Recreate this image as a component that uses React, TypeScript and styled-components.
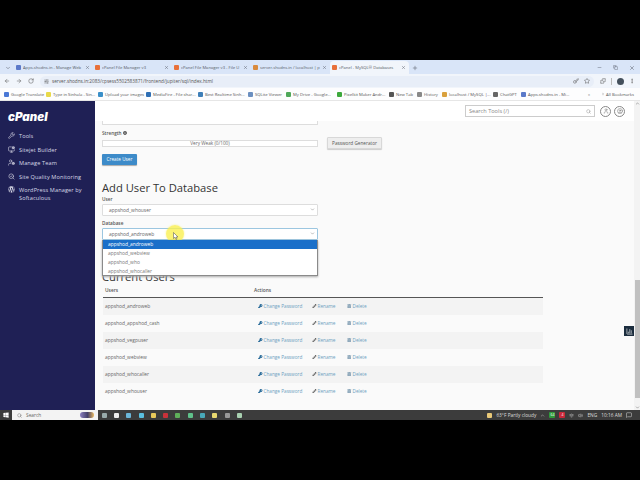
import { createGlobalStyle, styled } from 'styled-components'
import {
  ArrowLeft, ArrowRight, BarChart3, ChevronDown, ChevronUp, CircleUser, Copy, Folder, Key,
  MessageSquare, Minus, MonitorCog, MoreVertical, Plus, Puzzle, RotateCw, Search, SearchCheck,
  SlidersHorizontal, Star, User, UserCog, Volume2, Wifi, Wrench, X,
} from 'lucide-react'
import { FaWordpress, FaInfoCircle, FaWindows, FaKey, FaPencilAlt, FaTrashAlt } from 'react-icons/fa'

const GlobalStyle = createGlobalStyle`
  html, body { margin: 0; padding: 0; background: #000; }
  body { width: 640px; height: 480px; overflow: hidden; font-family: "Open Sans", "Liberation Sans", sans-serif; }
  * { box-sizing: border-box; }
`

const Frame = styled.div`
  width: 640px;
  height: 480px;
  padding: 60px 0;
  display: flex;
  flex-direction: column;
`

const TabStrip = styled.div`
  height: 14px;
  background: #d9e5f8;
  display: flex;
  align-items: flex-end;
  padding-left: 2px;
  color: #555b66;
  font-size: 4.15px;
`

const StripButton = styled.div`
  width: 11px;
  height: 12px;
  display: flex;
  align-items: center;
  justify-content: center;
  margin-right: 1px;
`

const Tab = styled.div<{ $active?: boolean }>`
  width: 79px;
  height: 13px;
  padding: 0 3px 0 2px;
  border-radius: 4px 4px 0 0;
  background: ${p => (p.$active ? '#f1f5fb' : 'transparent')};
  display: flex;
  align-items: center;
  gap: 2px;
  white-space: nowrap;
`

const TabTitle = styled.span`
  flex: 1;
  overflow: hidden;
`

const Fav = styled.span<{ $c: string }>`
  width: 5px;
  height: 5px;
  flex: none;
  border-radius: 1px;
  background: ${p => p.$c};
`

const WindowControls = styled.div`
  margin-left: auto;
  height: 13px;
  width: 43px;
  display: flex;
  align-items: center;
  justify-content: space-between;
  padding-right: 5px;
`

const AddressRow = styled.div`
  height: 14px;
  background: #f1f5fb;
  display: flex;
  align-items: center;
  padding: 0 5px 0 4px;
  gap: 6px;
  color: #555;
`

const AddressPill = styled.div`
  flex: 1;
  height: 11px;
  padding: 0 4px;
  border-radius: 6px;
  background: #e8eef8;
  display: flex;
  align-items: center;
  font-size: 4.7px;
  color: #555;
  gap: 3px;
`

const Url = styled.span`
  flex: 1;
`

const PillIcons = styled.div`
  display: flex;
  gap: 5px;
`

const ProfileTools = styled.div`
  width: 35px;
  display: flex;
  align-items: center;
  justify-content: space-between;
`

const Divider = styled.span`
  width: 1px;
  height: 7px;
  background: #bbb;
`

const Profile = styled.span`
  width: 7px;
  height: 7px;
  border-radius: 50%;
  background: #44505c;
`

const Bookmarks = styled.div`
  height: 13px;
  background: #fdfdfe;
  border-bottom: 1px solid #e6e6e6;
  display: flex;
  align-items: center;
  padding-left: 4px;
  font-size: 4.2px;
  color: #555;
`

const Bookmark = styled.div<{ $w: number }>`
  width: ${p => p.$w}px;
  flex: none;
  display: flex;
  align-items: center;
  gap: 2px;
  white-space: nowrap;
`

const Page = styled.div`
  flex: 1;
  min-height: 0;
  display: flex;
  background: #fafafa;
`

const Sidebar = styled.nav`
  width: 95px;
  flex: none;
  background: #1f2055;
  color: #d7d8e6;
  padding: 10px 0 0 8px;
  font-size: 5.6px;
`

const Logo = styled.div`
  font-family: Inter, sans-serif;
  font-weight: 900;
  font-style: italic;
  font-size: 11.5px;
  line-height: 12px;
  color: #fff;
  margin-bottom: 9px;
`

const NavItem = styled.div`
  display: flex;
  align-items: flex-start;
  gap: 4px;
  min-height: 13.5px;
  line-height: 8px;
  letter-spacing: 0.1px;
  svg { flex: none; }
`

const Main = styled.main`
  flex: 1;
  position: relative;
  overflow: hidden;
  display: flex;
  flex-direction: column;
`

const TopBar = styled.div`
  height: 20px;
  background: #fff;
  display: flex;
  justify-content: flex-end;
  align-items: center;
  gap: 3px;
  padding: 0 9px 0 0;
  color: #777;
`

const SearchBox = styled.div`
  width: 130px;
  height: 12px;
  border: 1px solid #ccc;
  background: #fff;
  display: flex;
  align-items: center;
  justify-content: space-between;
  padding: 0 3px;
  font-size: 5.6px;
  color: #888;
  margin-right: 2px;
`

const RoundIcon = styled.div`
  width: 11px;
  height: 11px;
  border: 1px solid #888;
  border-radius: 50%;
  display: flex;
  align-items: center;
  justify-content: center;
`

const Content = styled.div`
  padding: 0 91px 0 7px;
  display: flex;
  flex-direction: column;
  color: #444;
`

const CutInput = styled.div`
  width: 216px;
  height: 4px;
  background: #fff;
  border: 1px solid #ddd;
  border-top: 0;
  border-radius: 0 0 1px 1px;
`

const SmallLabel = styled.div`
  font-size: 4.7px;
  font-weight: 600;
  line-height: 6px;
  color: #555;
  display: flex;
  align-items: center;
  gap: 1px;
`

const StrengthLabel = styled(SmallLabel)`
  margin-top: 5px;
`

const StrengthRow = styled.div`
  display: flex;
  align-items: center;
  gap: 9px;
  height: 12px;
  margin-top: 1px;
`

const Meter = styled.div`
  width: 216px;
  height: 7px;
  border: 1px solid #ddd;
  background: #fff;
  font-size: 4.7px;
  line-height: 5px;
  text-align: center;
  color: #666;
`

const GenButton = styled.div`
  width: 55px;
  height: 12px;
  background: #eeeeee;
  border: 1px solid #d8d8d8;
  border-radius: 1px;
  box-shadow: 0 1px 1px #ccc;
  font-size: 4.7px;
  line-height: 10px;
  text-align: center;
  color: #555;
`

const PrimaryButton = styled.div`
  width: 35px;
  height: 11px;
  margin-top: 5px;
  background: #3d8bc9;
  border-radius: 1px;
  box-shadow: 0 1px 1px #aaa;
  font-size: 4.7px;
  line-height: 11px;
  text-align: center;
  color: #fff;
`

const Heading = styled.h2`
  margin: 16px 0 0;
  font-size: 11.2px;
  line-height: 14px;
  font-weight: 400;
  color: #333;
`

const FieldLabel = styled(SmallLabel)`
  margin-top: 1px;
`

const SelectBox = styled.div<{ $focus?: boolean }>`
  width: 216px;
  height: ${p => (p.$focus ? 12 : 11.5)}px;
  margin-top: 2px;
  margin-bottom: 3px;
  padding: 0 2px 0 6px;
  background: #fff;
  border: 1px solid ${p => (p.$focus ? '#9cc6e0' : '#ddd')};
  border-radius: 1px;
  display: flex;
  align-items: center;
  justify-content: space-between;
  font-size: 4.9px;
  color: #666;
`

const DropWrap = styled.div`
  position: relative;
  width: 216px;
`

const Dropdown = styled.div`
  position: absolute;
  top: -3px;
  left: 0;
  width: 216px;
  height: 36px;
  background: #fff;
  border: 1px solid #8a8a8a;
  border-top: 0;
  box-shadow: 0 1px 2px #aaa;
  font-size: 4.9px;
  color: #777;
  z-index: 3;
`

const Option = styled.div<{ $on?: boolean }>`
  height: 9px;
  line-height: 9px;
  padding-left: 5px;
  background: ${p => (p.$on ? '#1a6fc9' : 'transparent')};
  color: ${p => (p.$on ? '#fff' : '#777')};
`

const Halo = styled.div`
  position: absolute;
  left: 71px;
  top: 124px;
  width: 18px;
  height: 18px;
  border-radius: 50%;
  background: rgba(250, 240, 80, 0.8);
  box-shadow: 0 0 2px rgba(250, 240, 80, 0.7);
  z-index: 2;
`

const CursorMark = styled.svg`
  display: block;
  margin: 7px 0 0 7px;
`

const UsersHeading = styled(Heading)`
  margin-top: 27px;
`

const Table = styled.div`
  width: 440px;
  margin-top: 3px;
  margin-left: 1px;
`

const HeaderRow = styled.div`
  display: grid;
  grid-template-columns: 149px 1fr;
  height: 11px;
  padding-left: 2px;
  border-bottom: 1px solid #555;
  font-size: 4.8px;
  font-weight: 600;
  line-height: 7px;
  color: #555;
`

const Row = styled.div<{ $alt: boolean }>`
  display: grid;
  grid-template-columns: 149px 1fr;
  height: 17px;
  align-items: center;
  padding-left: 2px;
  background: ${p => (p.$alt ? '#f3f3f3' : '#fafafa')};
  font-size: 4.9px;
  color: #666;
`

const Actions = styled.div`
  display: flex;
  padding-left: 4px;
  font-size: 4.7px;
  color: #6d9fbf;
`

const Action = styled.div<{ $w: number; $c: string }>`
  width: ${p => p.$w}px;
  display: flex;
  align-items: center;
  gap: 1px;
  svg { color: ${p => p.$c}; }
`

const ChartFab = styled.div`
  position: absolute;
  right: 0;
  top: 225px;
  width: 10px;
  height: 10px;
  background: #1b2d3e;
  color: #fff;
  display: flex;
  align-items: center;
  justify-content: center;
`

const Scrollbar = styled.div`
  width: 6px;
  flex: none;
  background: #f3f3f3;
  display: flex;
  flex-direction: column;
  align-items: center;
  color: #555;
`

const Thumb = styled.div`
  width: 5px;
  height: 118px;
  margin-top: 174px;
  margin-bottom: auto;
  background: #c0c0c0;
`

const Taskbar = styled.div`
  height: 10px;
  flex: none;
  background: #3c3c3c;
  display: flex;
  align-items: center;
  color: #ddd;
  font-size: 4.8px;
`

const StartButton = styled.div`
  width: 12px;
  display: flex;
  justify-content: center;
  color: #fff;
`

const TaskSearch = styled.div`
  width: 86px;
  height: 10px;
  background: #f3f3f3;
  color: #666;
  display: flex;
  align-items: center;
  gap: 4px;
  padding: 0 4px 0 5px;
`

const SearchText = styled.span`
  flex: 1;
`

const Doodle = styled.span`
  width: 14px;
  height: 6px;
  border-radius: 3px;
  background: linear-gradient(90deg, #8a7fc0, #44406a 55%, #e8b860);
`

const TaskApp = styled.span<{ $c: string }>`
  width: 12.3px;
  display: flex;
  justify-content: center;
  &::before {
    content: '';
    width: 5px;
    height: 5px;
    border-radius: 1px;
    background: ${p => p.$c};
  }
`

const Tray = styled.div`
  margin-left: auto;
  display: flex;
  align-items: center;
  gap: 4px;
  padding-right: 8px;
`

const TrayBadge = styled.span<{ $c: string }>`
  width: 6px;
  height: 6px;
  border-radius: 1px;
  background: ${p => p.$c};
  color: #fff;
  font-size: 3.4px;
  line-height: 6px;
  text-align: center;
`

const tabs = [
  { title: 'Apps.shodns.in - Manage Web', c: '#5b79c9' },
  { title: 'cPanel File Manager v3', c: '#e8703a' },
  { title: 'cPanel File Manager v3 - File U', c: '#e8703a' },
  { title: 'server.shodns.in / localhost | p', c: '#d98a3d' },
  { title: 'cPanel - MySQL® Databases', c: '#e8703a', active: true },
]

const bookmarks = [
  { t: 'Google Translate', c: '#4a78d6', w: 42 },
  { t: 'Type in Sinhala - Sin...', c: '#e8d94a', w: 52 },
  { t: 'Upload your images', c: '#3a8fc9', w: 48 },
  { t: 'MediaFire - File shar...', c: '#2f6fb5', w: 52 },
  { t: 'Best Realtime Sinh...', c: '#3f7fb8', w: 50 },
  { t: 'SQLite Viewer', c: '#6b8fc0', w: 38 },
  { t: 'My Drive - Google...', c: '#4fa85a', w: 51 },
  { t: 'Pixelkit Maker Andr...', c: '#3ca83c', w: 52 },
  { t: 'New Tab', c: '#555', w: 28 },
  { t: 'History', c: '#888', w: 25 },
  { t: 'localhost / MySQL |...', c: '#d9a03d', w: 51 },
  { t: 'ChatGPT', c: '#666', w: 28 },
  { t: 'Apps.shodns.in - Mi...', c: '#5b79c9', w: 67 },
]

const nav = [
  { t: 'Tools', icon: <Wrench size={7} /> },
  { t: 'Sitejet Builder', icon: <MonitorCog size={7} /> },
  { t: 'Manage Team', icon: <UserCog size={7} /> },
  { t: 'Site Quality Monitoring', icon: <SearchCheck size={7} /> },
  { t: 'WordPress Manager by Softaculous', icon: <FaWordpress size={7} /> },
]

const users = [
  'appshod_androweb',
  'appshod_appshod_cash',
  'appshod_vegpuser',
  'appshod_webview',
  'appshod_whocaller',
  'appshod_whouser',
]

const options = ['appshod_androweb', 'appshod_webview', 'appshod_who', 'appshod_whocaller']

const taskApps = ['#9aa', '#eee', '#6bb6d9', '#5ac0e0', '#e8c95a', '#c8323a', '#5fb05a', '#5fc08a', '#48a8b8', '#e8d870', '#999', '#a8d0b0']

export default function App() {
  return (
    <Frame>
      <GlobalStyle />
      <TabStrip>
        <StripButton><ChevronDown size={6} /></StripButton>
        {tabs.map(tab => (
          <Tab key={tab.title} $active={tab.active}>
            <Fav $c={tab.c} />
            <TabTitle>{tab.title}</TabTitle>
            <X size={5} />
          </Tab>
        ))}
        <StripButton><Plus size={6} /></StripButton>
        <WindowControls>
          <Minus size={5} />
          <Copy size={5} />
          <X size={6} />
        </WindowControls>
      </TabStrip>
      <AddressRow>
        <ArrowLeft size={6} />
        <ArrowRight size={6} />
        <RotateCw size={6} />
        <AddressPill>
          <SlidersHorizontal size={5} />
          <Url>server.shodns.in:2083/cpsess5502583871/frontend/jupiter/sql/index.html</Url>
          <PillIcons>
            <Key size={6} />
            <Star size={6} />
          </PillIcons>
        </AddressPill>
        <ProfileTools>
          <Puzzle size={6} />
          <Divider />
          <Profile />
          <MoreVertical size={6} />
        </ProfileTools>
      </AddressRow>
      <Bookmarks>
        {bookmarks.map(b => (
          <Bookmark key={b.t} $w={b.w}>
            <Fav $c={b.c} />
            {b.t}
          </Bookmark>
        ))}
        <Bookmark $w={14}>»</Bookmark>
        <Bookmark $w={32}><Folder size={6} />All Bookmarks</Bookmark>
      </Bookmarks>
      <Page>
        <Sidebar>
          <Logo>cPanel</Logo>
          {nav.map(item => (
            <NavItem key={item.t}>{item.icon}<span>{item.t}</span></NavItem>
          ))}
        </Sidebar>
        <Main>
          <TopBar>
            <SearchBox>Search Tools (/)<Search size={5} /></SearchBox>
            <RoundIcon><User size={6} /></RoundIcon>
            <RoundIcon><CircleUser size={6} /></RoundIcon>
          </TopBar>
          <Content>
            <CutInput />
            <StrengthLabel>Strength <FaInfoCircle size={4} /></StrengthLabel>
            <StrengthRow>
              <Meter>Very Weak (0/100)</Meter>
              <GenButton>Password Generator</GenButton>
            </StrengthRow>
            <PrimaryButton>Create User</PrimaryButton>
            <Heading>Add User To Database</Heading>
            <FieldLabel>User</FieldLabel>
            <SelectBox>appshod_whouser<ChevronDown size={5} /></SelectBox>
            <FieldLabel>Database</FieldLabel>
            <SelectBox $focus>appshod_androweb<ChevronDown size={5} /></SelectBox>
            <DropWrap>
              <Dropdown>
                {options.map((o, i) => <Option key={o} $on={i === 0}>{o}</Option>)}
              </Dropdown>
            </DropWrap>
            <UsersHeading>Current Users</UsersHeading>
            <Table>
              <HeaderRow><span>Users</span><span>Actions</span></HeaderRow>
              {users.map((u, i) => (
                <Row key={u} $alt={i % 2 === 0}>
                  <span>{u}</span>
                  <Actions>
                    <Action $w={54} $c="#2f6f9c"><FaKey size={4.5} />Change Password</Action>
                    <Action $w={35} $c="#666"><FaPencilAlt size={4.5} />Rename</Action>
                    <Action $w={25} $c="#6d8fa8"><FaTrashAlt size={4.5} />Delete</Action>
                  </Actions>
                </Row>
              ))}
            </Table>
          </Content>
          <Halo>
            <CursorMark width="6" height="8" viewBox="0 0 6 8">
              <path d="M0.5 0.5 L0.5 6.5 L2 5.2 L3 7.5 L4 7 L3 5 L5 5 Z" fill="#fff" stroke="#444" strokeWidth="0.5" />
            </CursorMark>
          </Halo>
          <ChartFab><BarChart3 size={7} /></ChartFab>
        </Main>
        <Scrollbar>
          <ChevronUp size={5} />
          <Thumb />
          <ChevronDown size={5} />
        </Scrollbar>
      </Page>
      <Taskbar>
        <StartButton><FaWindows size={6} /></StartButton>
        <TaskSearch><Search size={5} /><SearchText>Search</SearchText><Doodle /></TaskSearch>
        {taskApps.map((c, i) => <TaskApp key={i} $c={c} />)}
        <Tray>
          <Fav $c="#e8c878" />
          <span>63°F Partly cloudy</span>
          <ChevronUp size={5} />
          <TrayBadge $c="#2f9a3a">64</TrayBadge>
          <TrayBadge $c="#c8283a">4</TrayBadge>
          <Wifi size={5} />
          <Volume2 size={5} />
          <span>ENG</span>
          <span>10:16 AM</span>
          <MessageSquare size={6} />
        </Tray>
      </Taskbar>
    </Frame>
  )
}
